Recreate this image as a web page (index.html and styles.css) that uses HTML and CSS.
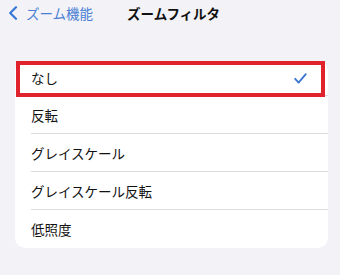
FILE: index.html
```html
<!DOCTYPE html>
<html lang="ja">
<head>
<meta charset="utf-8">
<link rel="stylesheet" href="styles.css">
</head>
<body>
<header class="nav">
  <div class="back">
    <svg class="chev" width="10" height="14" viewBox="0 0 10 14"><path d="M8 1.2 L2.2 7 L8 12.8" fill="none" stroke="#3a78d8" stroke-width="2.2" stroke-linecap="round" stroke-linejoin="round"/></svg>
    <span class="back-text">ズーム機能</span>
  </div>
  <div class="title">ズームフィルタ</div>
</header>
<main class="wrap">
  <ul class="card">
    <li class="row first"><div class="cell"><span>なし</span><svg class="check" width="13" height="11" viewBox="0 0 13 11"><path d="M1.2 5.8 L4.6 9.6 L11.8 1.2" fill="none" stroke="#3a74d0" stroke-width="1.8" stroke-linecap="round" stroke-linejoin="round"/></svg></div></li>
    <li class="row"><div class="cell"><span>反転</span></div></li>
    <li class="row"><div class="cell"><span>グレイスケール</span></div></li>
    <li class="row"><div class="cell"><span>グレイスケール反転</span></div></li>
    <li class="row last"><div class="cell"><span>低照度</span></div></li>
  </ul>
  <div class="highlight"></div>
</main>
</body>
</html>
```
FILE: styles.css
```css
html, body {
  margin: 0;
  padding: 0;
  background: #f2f2f7;
  font-family: "Noto Sans CJK JP", "Noto Sans", sans-serif;
  color: #111;
}
.nav {
  display: flex;
  align-items: center;
  height: 26px;
}
.back {
  display: flex;
  align-items: center;
  margin-left: 8px;
}
.chev {
  display: block;
}
.back-text {
  margin-left: 8px;
  font-size: 13.5px;
  color: #4a7fd4;
  line-height: 26px;
}
.title {
  margin-left: 34px;
  font-size: 13.5px;
  font-weight: bold;
  line-height: 26px;
  color: #111;
}
.wrap {
  position: relative;
  margin-top: 35px;
}
.card {
  list-style: none;
  margin: 0 12px 0 15px;
  padding: 0;
  background: #fff;
  border-radius: 10px;
  overflow: hidden;
}
.row {
  padding-left: 16px;
  height: 38px;
}
.row.first {
  height: 35px;
}
.cell {
  height: 100%;
  box-sizing: border-box;
  display: flex;
  align-items: center;
  justify-content: space-between;
  padding-right: 21px;
  border-bottom: 1px solid #dcdce0;
  font-size: 13.5px;
}
.row.last .cell {
  border-bottom: none;
}
.check {
  display: block;
}
.highlight {
  position: absolute;
  left: 16px;
  top: 0;
  width: 309px;
  height: 36px;
  box-sizing: border-box;
  border: 4px solid #e0222c;
}
```
